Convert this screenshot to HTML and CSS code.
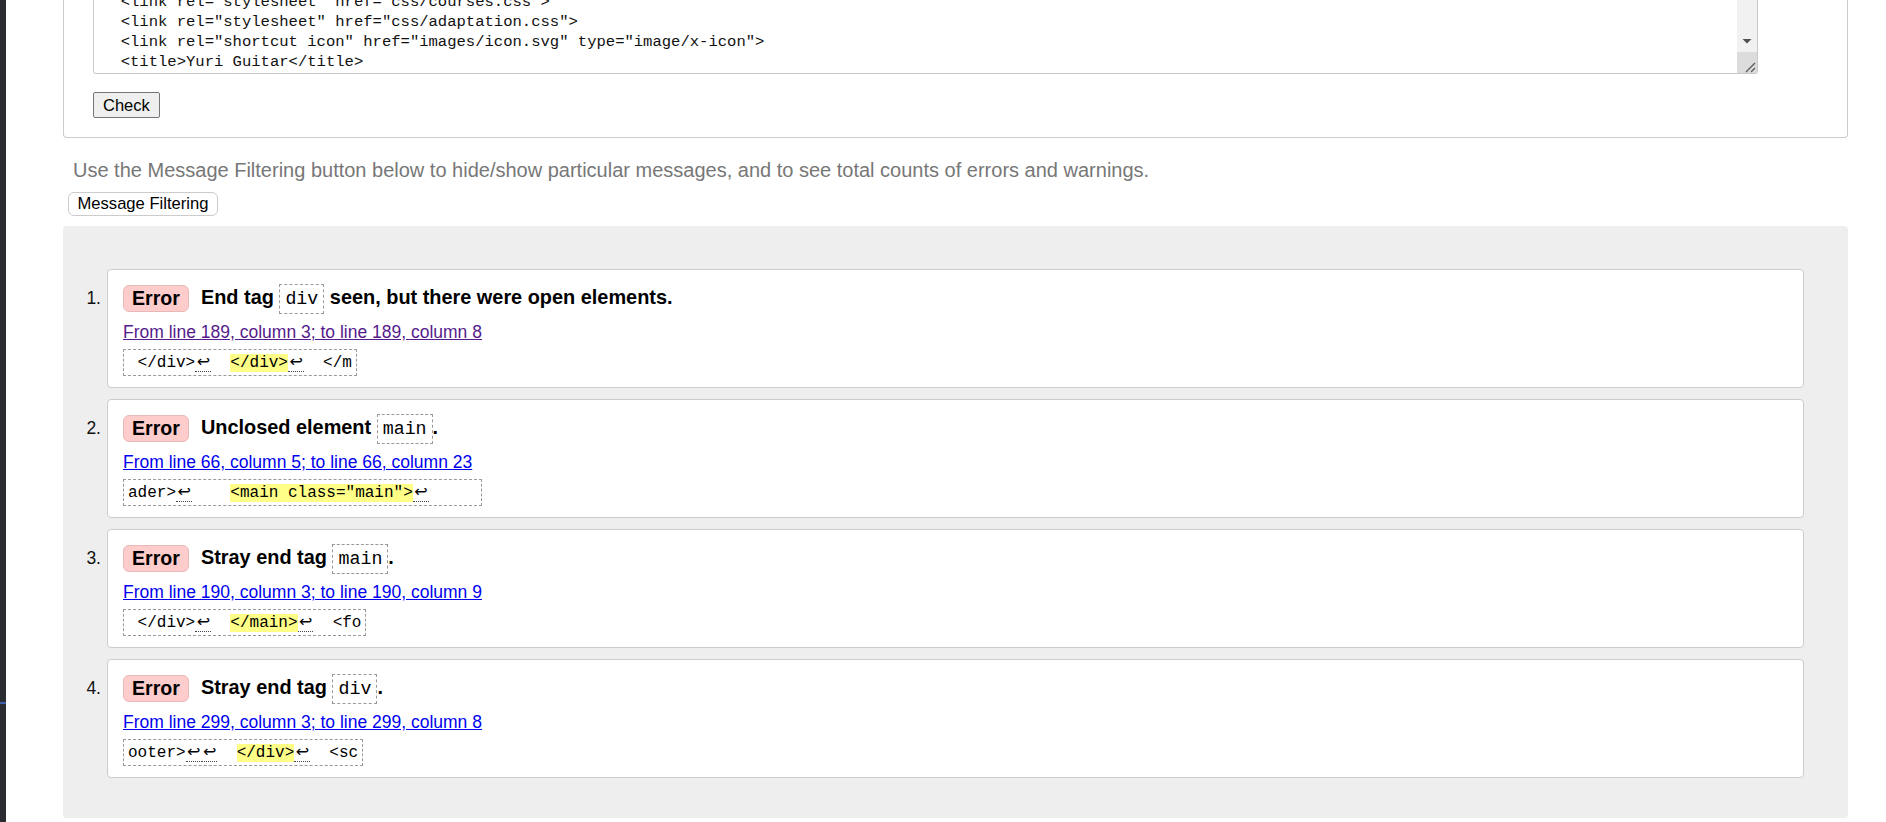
FILE: index.html
```html
<!DOCTYPE html>
<html lang="en">
<head>
<meta charset="utf-8">
<title>Nu Html Checker</title>
<link rel="stylesheet" href="styles.css">
</head>
<body>
<div class="frame">
  <div class="edge"></div>
  <main class="page">
    <form class="input-card">
      <div class="textarea">
        <pre class="source">  &lt;link rel="stylesheet" href="css/style.css"&gt;
  &lt;link rel="stylesheet" href="css/courses.css"&gt;
  &lt;link rel="stylesheet" href="css/adaptation.css"&gt;
  &lt;link rel="shortcut icon" href="images/icon.svg" type="image/x-icon"&gt;
  &lt;title&gt;Yuri Guitar&lt;/title&gt;</pre>
        <div class="scrollbar">
          <div class="track"></div>
          <div class="arrow"><svg width="20" height="21" viewBox="0 0 20 21"><polygon points="5.5,8 14.5,8 10,12.5" fill="#505050"/></svg></div>
          <div class="grip"><svg width="20" height="21" viewBox="0 0 20 21"><path d="M9 20 L18 11 M14 20 L18 16" stroke="#5a5a5a" stroke-width="1.3" fill="none"/></svg></div>
        </div>
      </div>
      <button type="button" class="btn-check">Check</button>
    </form>

    <p class="info">Use the Message Filtering button below to hide/show particular messages, and to see total counts of errors and warnings.</p>
    <button type="button" class="btn-filter">Message Filtering</button>

    <div class="results">
      <ol class="messages">
        <li class="msg">
          <span class="num">1.</span>
          <div class="card">
            <p class="title"><strong class="badge">Error</strong><span>End tag <code>div</code> seen, but there were open elements.</span></p>
            <p class="loc"><a href="#l189" class="visited">From line 189, column 3; to line 189, column 8</a></p>
            <p class="extract"><code> &lt;/div&gt;<span class="lf">↩</span>  <b class="hl">&lt;/div&gt;</b><span class="lf">↩</span>  &lt;/m</code></p>
          </div>
        </li>
        <li class="msg">
          <span class="num">2.</span>
          <div class="card">
            <p class="title"><strong class="badge">Error</strong><span>Unclosed element <code>main</code>.</span></p>
            <p class="loc"><a href="#l66">From line 66, column 5; to line 66, column 23</a></p>
            <p class="extract"><code>ader&gt;<span class="lf">↩</span>    <b class="hl">&lt;main class="main"&gt;</b><span class="lf">↩</span>     </code></p>
          </div>
        </li>
        <li class="msg">
          <span class="num">3.</span>
          <div class="card">
            <p class="title"><strong class="badge">Error</strong><span>Stray end tag <code>main</code>.</span></p>
            <p class="loc"><a href="#l190">From line 190, column 3; to line 190, column 9</a></p>
            <p class="extract"><code> &lt;/div&gt;<span class="lf">↩</span>  <b class="hl">&lt;/main&gt;</b><span class="lf">↩</span>  &lt;fo</code></p>
          </div>
        </li>
        <li class="msg">
          <span class="num">4.</span>
          <div class="card">
            <p class="title"><strong class="badge">Error</strong><span>Stray end tag <code>div</code>.</span></p>
            <p class="loc"><a href="#l299">From line 299, column 3; to line 299, column 8</a></p>
            <p class="extract"><code>ooter&gt;<span class="lf">↩</span><span class="lf">↩</span>  <b class="hl">&lt;/div&gt;</b><span class="lf">↩</span>  &lt;sc</code></p>
          </div>
        </li>
      </ol>
    </div>
  </main>
</div>
</body>
</html>
```

FILE: styles.css
```css
* { box-sizing: border-box; }

html, body {
  margin: 0;
  height: 100%;
}

body {
  font-family: "Liberation Sans", Arial, sans-serif;
  background: #fff;
  color: #000;
  overflow: hidden;
}

.frame {
  display: flex;
  min-height: 822px;
}

.edge {
  width: 6px;
  flex: none;
  background: linear-gradient(to bottom, #2a2c32 0 702px, #3f5fae 702px 704px, #2a2c32 704px);
}

.page {
  flex: 1;
  padding: 0 38px 0 57px;
}

/* ---------- input form ---------- */
.input-card {
  border: 1px solid #ccc;
  border-top: 0;
  border-radius: 0 0 4px 4px;
  padding: 0 89px 19px 29px;
}

.textarea {
  display: flex;
  height: 74px;
  border: 1px solid #c8c8c8;
  border-top: 0;
  border-radius: 0 0 3px 3px;
  overflow: hidden;
  background: #fff;
}

.source {
  flex: 1;
  margin: 0;
  padding: 0 0 1px 8px;
  font: 15.55px/20px "Liberation Mono", monospace;
  color: #111;
  display: flex;
  flex-direction: column;
  justify-content: flex-end;
  overflow: hidden;
}

.scrollbar {
  width: 20px;
  flex: none;
  display: flex;
  flex-direction: column;
  background: #f1f1f1;
}

.track { flex: 1; }

.arrow {
  height: 21px;
  display: flex;
}

.grip {
  height: 21px;
  background: #dcdcdc;
  display: flex;
}

.btn-check {
  display: block;
  margin-top: 18px;
  height: 26px;
  padding: 0 9px;
  font: 16.5px "Liberation Sans", Arial, sans-serif;
  color: #000;
  background: #efefef;
  border: 1px solid #767676;
  border-radius: 2px;
}

/* ---------- filtering ---------- */
.info {
  margin: 21px 0 0 10px;
  font-size: 20px;
  line-height: 22px;
  color: #777;
}

.btn-filter {
  display: block;
  margin: 11px 0 0 5px;
  height: 24px;
  padding: 0 8.5px;
  font: 16.6px "Liberation Sans", Arial, sans-serif;
  color: #000;
  background: #fff;
  border: 1px solid #ccc;
  border-radius: 6px;
}

/* ---------- results ---------- */
.results {
  margin-top: 10px;
  background: #eee;
  border-radius: 4px;
  padding: 43px 44px 40px 0;
}

.messages {
  list-style: none;
  margin: 0;
  padding: 0;
  display: flex;
  flex-direction: column;
  gap: 11px;
}

.msg { display: flex; }

.num {
  width: 44px;
  flex: none;
  text-align: right;
  padding: 14px 6px 0 0;
  font-size: 17.5px;
  line-height: 30px;
  color: #111;
}

.card {
  flex: 1;
  background: #fff;
  border: 1px solid #ccc;
  border-radius: 4px;
  padding: 13px 10px 11px 15px;
}

.title {
  margin: 0;
  height: 30px;
  display: flex;
  align-items: center;
  font-weight: bold;
  font-size: 19.9px;
  line-height: 30px;
}

.badge {
  display: inline-block;
  background: #fcc;
  border: 1px solid #e9b9b9;
  border-radius: 6px;
  padding: 0 8px;
  font-size: 19.6px;
  line-height: 25px;
  margin-right: 12px;
}

.title code {
  display: inline-block;
  vertical-align: middle;
  font: 18.3px/28px "Liberation Mono", monospace;
  border: 1px dashed #999;
  padding: 0 5px;
}

.loc {
  margin: 9px 0 0;
  font-size: 17.5px;
  line-height: 20px;
}

.loc a { color: #0000ee; }
.loc a.visited { color: #551a8b; }

.extract {
  margin: 7px 0 0;
  width: fit-content;
  height: 27px;
  overflow: hidden;
  border: 1px dashed #999;
  padding: 2px 4px 0;
  font: 16px/23px "Liberation Mono", monospace;
  white-space: pre;
}

.extract code { font: inherit; }

.hl {
  background: #ff8;
  font-weight: normal;
}

.lf {
  font-family: "DejaVu Sans", sans-serif;
  line-height: 1;
  padding: 0 1px 0 1.5px;
  border-bottom: 1px dotted #444;
}
```
